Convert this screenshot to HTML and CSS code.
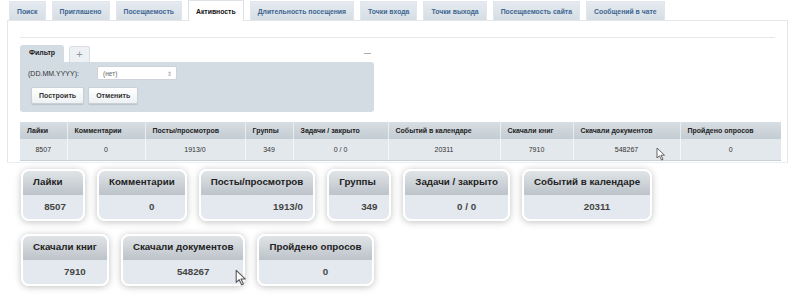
FILE: index.html
```html
<!DOCTYPE html>
<html>
<head>
<meta charset="utf-8">
<link rel="stylesheet" href="styles.css">
</head>
<body>
<div class="tabs">
  <span class="tab">Поиск</span>
  <span class="tab">Приглашено</span>
  <span class="tab">Посещаемость</span>
  <span class="tab active">Активность</span>
  <span class="tab">Длительность посещения</span>
  <span class="tab">Точки входа</span>
  <span class="tab">Точки выхода</span>
  <span class="tab">Посещаемость сайта</span>
  <span class="tab">Сообщений в чате</span>
</div>
<div class="panel">
  <div class="sep"></div>
  <div class="filter">
    <div class="ftabs">
      <span class="ftab">Фильтр</span>
      <span class="ftab plus">+</span>
      <span class="minus"></span>
    </div>
    <div class="fbody">
      <div class="frow">
        <span class="flabel">(DD.MM.YYYY):</span>
        <span class="select">(нет)<span class="arrows">&#8661;</span></span>
      </div>
      <div class="frow btns">
        <span class="btn">Построить</span>
        <span class="btn">Отменить</span>
      </div>
    </div>
  </div>
  <div class="tablewrap">
    <table class="grid">
      <colgroup>
        <col class="c1"><col class="c2"><col class="c3"><col class="c4"><col class="c5"><col class="c6"><col class="c7"><col class="c8"><col class="c9">
      </colgroup>
      <thead>
        <tr><th>Лайки</th><th>Комментарии</th><th>Посты/просмотров</th><th>Группы</th><th>Задачи / закрыто</th><th>Событий в календаре</th><th>Скачали книг</th><th>Скачали документов</th><th>Пройдено опросов</th></tr>
      </thead>
      <tbody>
        <tr><td>8507</td><td>0</td><td>1913/0</td><td>349</td><td>0 / 0</td><td>20311</td><td>7910</td><td>548267</td><td>0</td></tr>
      </tbody>
    </table>
    <svg class="cursor cur1" width="10" height="14" viewBox="0 0 10 14"><path d="M1 1 L1 11 L3.5 8.8 L5.5 13 L7 12.3 L5 8.2 L8.5 8.2 Z" fill="#fff" stroke="#555" stroke-width="0.9" stroke-linejoin="round"/></svg>
  </div>
</div>
<div class="cards">
  <div class="crow">
    <div class="card"><div class="ch">Лайки</div><div class="cv v-a">8507</div></div>
    <div class="card"><div class="ch">Комментарии</div><div class="cv">0</div></div>
    <div class="card"><div class="ch">Посты/просмотров</div><div class="cv v-b">1913/0</div></div>
    <div class="card"><div class="ch">Группы</div><div class="cv">349</div></div>
    <div class="card"><div class="ch">Задачи / закрыто</div><div class="cv">0 / 0</div></div>
    <div class="card"><div class="ch">Событий в календаре</div><div class="cv">20311</div></div>
  </div>
  <div class="crow">
    <div class="card"><div class="ch">Скачали книг</div><div class="cv">7910</div></div>
    <div class="card"><div class="ch">Скачали документов</div><div class="cv">548267</div></div>
    <div class="card"><div class="ch">Пройдено опросов</div><div class="cv">0</div></div>
  </div>
  <svg class="cursor cur2" width="12" height="17" viewBox="0 0 10 14"><path d="M1 1 L1 11 L3.5 8.8 L5.5 13 L7 12.3 L5 8.2 L8.5 8.2 Z" fill="#fff" stroke="#555" stroke-width="0.9" stroke-linejoin="round"/></svg>
</div>
</body>
</html>
```
FILE: styles.css
```css
html, body {
  margin: 0;
  padding: 0;
  background: #fff;
  font-family: "Liberation Sans", Arial, sans-serif;
}
body {
  width: 801px;
  height: 307px;
  overflow: hidden;
  position: relative;
}
.tabs {
  display: flex;
  align-items: flex-end;
  gap: 6px;
  padding: 6px 0 0 9px;
  height: 20px;
  box-sizing: border-box;
  position: relative;
  z-index: 2;
}
.tab {
  height: 19px;
  line-height: 19px;
  padding: 0 7px;
  font-size: 6.85px;
  font-weight: bold;
  color: #3d6690;
  background: linear-gradient(#e4eaef, #d6dee5);
  border: 1px solid #e0e6eb;
  border-bottom: none;
  box-sizing: border-box;
  white-space: nowrap;
}
.tab.active {
  height: 21px;
  line-height: 21px;
  background: #fff;
  color: #111;
  border: 1px solid #dde2e6;
  border-bottom: none;
  margin-bottom: -1px;
}
.panel {
  margin-left: 7px;
  width: 781px;
  height: 143px;
  border: 1px solid #e3e7ea;
  border-bottom: 1px solid #eceff1;
  box-sizing: border-box;
  padding: 16px 0 0 12px;
  position: relative;
  z-index: 1;
}
.sep {
  height: 1px;
  width: 755px;
  background: #e6e9ec;
}
.filter {
  margin-top: 7px;
  width: 354px;
}
.ftabs {
  display: flex;
  align-items: flex-end;
  gap: 5px;
  height: 17px;
  position: relative;
}
.ftab {
  height: 17px;
  line-height: 16px;
  padding: 0 9px;
  font-size: 7px;
  font-weight: bold;
  color: #222;
  background: #d4dce3;
  border-radius: 3px 3px 0 0;
  box-sizing: border-box;
}
.ftab.plus {
  height: 16px;
  padding: 0 6px;
  font-size: 11px;
  line-height: 15px;
  font-weight: normal;
  color: #8a96a0;
  background: #edf1f4;
  border: 1px solid #d8dee3;
  border-bottom: none;
  margin-bottom: 0;
}
.minus {
  position: absolute;
  right: 3px;
  top: 8px;
  width: 7px;
  height: 1px;
  background: #a7b0b8;
}
.fbody {
  background: #d4dce3;
  height: 50px;
  border-radius: 0 3px 3px 3px;
  padding: 4px 0 0 8px;
  box-sizing: border-box;
}
.frow {
  display: flex;
  align-items: center;
}
.flabel {
  font-size: 7px;
  color: #333;
  width: 69px;
}
.select {
  width: 80px;
  height: 14px;
  line-height: 14px;
  background: #fff;
  border: 1px solid #cdd3d8;
  border-radius: 2px;
  box-sizing: border-box;
  font-size: 6.5px;
  color: #666;
  padding-left: 5px;
  position: relative;
}
.arrows {
  position: absolute;
  right: 4px;
  top: 0;
  font-size: 6px;
  color: #999;
}
.btns {
  margin-top: 7px;
  gap: 4px;
  padding-left: 3px;
}
.btn {
  height: 17px;
  line-height: 16px;
  padding: 0 7px;
  font-size: 7px;
  font-weight: bold;
  color: #333;
  background: linear-gradient(#ffffff, #eef1f3);
  border: 1px solid #c9d0d6;
  border-radius: 2px;
  box-sizing: border-box;
  box-shadow: 0 1px 1px rgba(0,0,0,0.12);
}
.tablewrap {
  margin-top: 10px;
  position: relative;
}
.grid {
  width: 761px;
  border-collapse: collapse;
  table-layout: fixed;
  font-size: 7px;
}
.c1 { width: 47px; }
.c2 { width: 78px; }
.c3 { width: 100px; }
.c4 { width: 48px; }
.c5 { width: 95px; }
.c6 { width: 112px; }
.c7 { width: 73px; }
.c8 { width: 107px; }
.c9 { width: 101px; }
.grid th {
  height: 17px;
  text-align: left;
  padding: 0 7px;
  font-weight: bold;
  color: #222;
  background: linear-gradient(#d6dde3, #c4ccd3);
  border-right: 1px solid #e9edf0;
  white-space: nowrap;
}
.grid th:last-child, .grid td:last-child { border-right: none; }
.grid td {
  height: 19px;
  text-align: center;
  color: #333;
  background: #e3e8ec;
  border-right: 1px solid #f4f6f8;
  border-bottom: 1px solid #c8cfd5;
}
.cursor {
  position: absolute;
}
.cur1 {
  left: 636px;
  top: 25px;
}
.cards {
  position: relative;
  padding: 6px 0 0 21px;
}
.crow {
  display: flex;
  gap: 12px;
  margin-bottom: 13px;
}
.card {
  border: 2px solid #fff;
  border-radius: 8px;
  overflow: hidden;
  box-shadow: 0 1px 7px rgba(0,0,0,0.25);
  min-width: 64px;
  box-sizing: border-box;
}
.ch {
  height: 24px;
  line-height: 22px;
  padding: 0 10px;
  font-size: 9.75px;
  font-weight: bold;
  color: #222;
  background: linear-gradient(#e0e4e7, #bcc3c9);
  white-space: nowrap;
}
.cv {
  height: 24px;
  line-height: 24px;
  text-align: center;
  padding-left: 20px;
  font-size: 9.75px;
  font-weight: bold;
  color: #444;
  background: #e3e9ee;
}
.cv.v-a { padding-left: 4px; }
.cv.v-b { padding-left: 62px; }
.cur2 {
  left: 235px;
  top: 106px;
}
```
